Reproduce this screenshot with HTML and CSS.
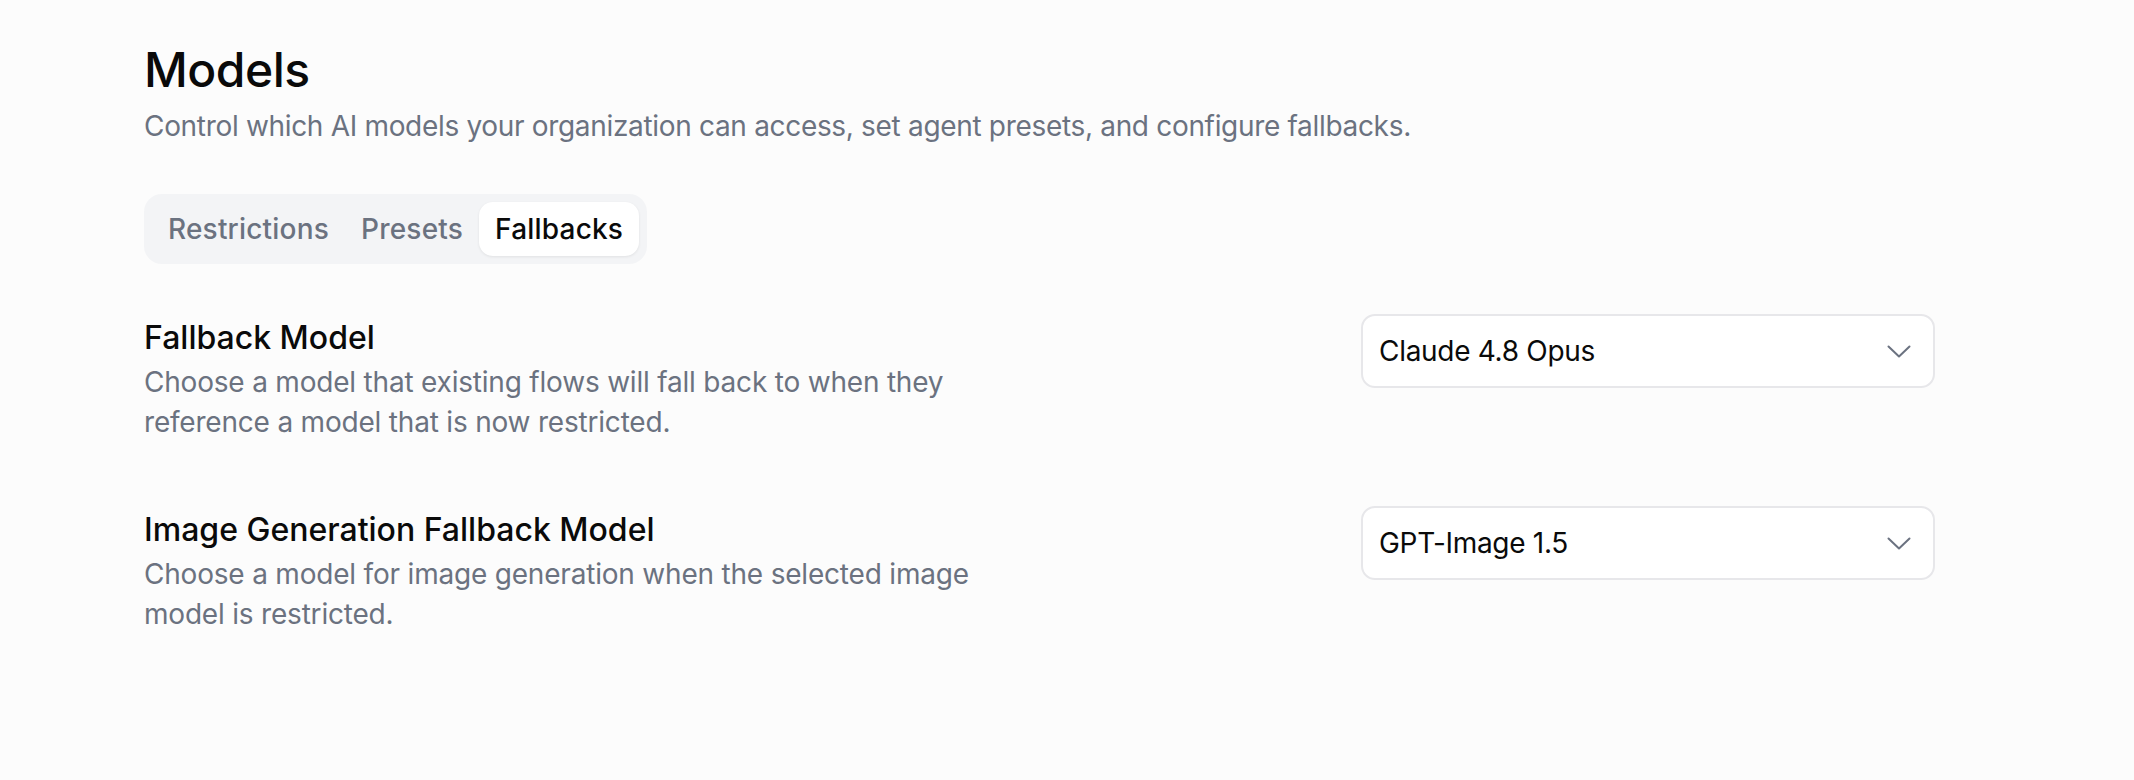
FILE: index.html
```html
<!DOCTYPE html>
<html>
<head>
    <title>Models</title>
    <link rel="stylesheet" href="styles.css">
</head>
<body>
    <div class="page">
        <h1 class="title">Models</h1>
        <p class="subtitle">Control which AI models your organization can access, set agent presets, and configure fallbacks.</p>

        <div class="tabs">
            <button class="tab">Restrictions</button>
            <button class="tab">Presets</button>
            <button class="tab active">Fallbacks</button>
        </div>

        <div class="settings">
            <div class="setting">
                <div class="setting-text">
                    <h2>Fallback Model</h2>
                    <p>Choose a model that existing flows will fall back to when they reference a model that is now restricted.</p>
                </div>
                <div class="select">
                    <span>Claude 4.8 Opus</span>
                    <svg class="chevron" viewBox="0 0 24 13" fill="none" stroke="currentColor" stroke-width="2" stroke-linecap="round" stroke-linejoin="round"><path d="M1.5 1.5L12 11.5 22.5 1.5"/></svg>
                </div>
            </div>

            <div class="setting">
                <div class="setting-text">
                    <h2>Image Generation Fallback Model</h2>
                    <p>Choose a model for image generation when the selected image model is restricted.</p>
                </div>
                <div class="select">
                    <span>GPT-Image 1.5</span>
                    <svg class="chevron" viewBox="0 0 24 13" fill="none" stroke="currentColor" stroke-width="2" stroke-linecap="round" stroke-linejoin="round"><path d="M1.5 1.5L12 11.5 22.5 1.5"/></svg>
                </div>
            </div>
        </div>
    </div>
</body>
</html>
```
FILE: styles.css
```css
body {
    margin: 0;
    background-color: #fcfcfc;
    font-family: Inter, "Noto Sans", sans-serif;
    color: #0a0a0a;
}
.page {
    width: 1791px;
    padding: 38px 0 0 144px;
}
.title {
    margin: 0;
    font-size: 48px;
    font-weight: 500;
    line-height: 64px;
    letter-spacing: -0.5px;
}
.subtitle {
    margin: 4px 0 0;
    font-size: 28px;
    line-height: 40px;
    letter-spacing: -0.32px;
    color: #6b7280;
}
.tabs {
    display: inline-flex;
    margin-top: 48px;
    padding: 8px;
    background-color: #f3f4f6;
    border-radius: 18px;
}
.tab {
    border: none;
    background: none;
    font-family: inherit;
    font-size: 28px;
    font-weight: 500;
    letter-spacing: 0.2px;
    color: #6b7280;
    padding: 0 16px;
    height: 54px;
    border-radius: 14px;
}
.tab.active {
    background-color: #fff;
    color: #0a0a0a;
    box-shadow: 0 1px 3px rgba(0, 0, 0, 0.08);
}
.settings {
    display: flex;
    flex-direction: column;
    gap: 64px;
    margin-top: 50px;
}
.setting {
    display: flex;
    justify-content: space-between;
    align-items: flex-start;
}
.setting-text {
    max-width: 896px;
}
.setting-text h2 {
    margin: 0;
    font-size: 32px;
    font-weight: 500;
    line-height: 48px;
}
.setting-text p {
    margin: 0;
    font-size: 28px;
    line-height: 40px;
    letter-spacing: -0.2px;
    color: #6b7280;
}
.select {
    display: flex;
    align-items: center;
    justify-content: space-between;
    box-sizing: border-box;
    width: 574px;
    height: 74px;
    padding: 0 22px 0 16px;
    background-color: #fff;
    border: 2px solid #e7e7ea;
    border-radius: 14px;
    font-size: 28px;
    letter-spacing: -0.3px;
}
.chevron {
    width: 24px;
    height: 13px;
    color: #6b7280;
}
```
